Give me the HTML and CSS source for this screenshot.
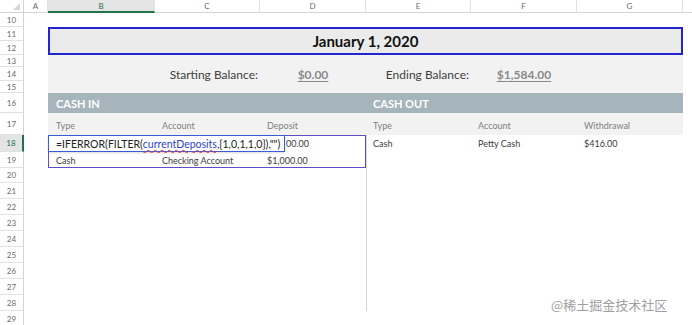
FILE: index.html
```html
<!DOCTYPE html>
<html lang="en">
<head>
    <meta charset="UTF-8">
    <title>Cash Flow</title>
    <link rel="stylesheet" href="styles.css">
</head>
<body>
    <div class="sheet">
        <!-- column headers -->
        <div class="corner">
            <svg viewBox="0 0 8 8"><path d="M8 0V8H0Z" fill="#d6d6d6"/></svg>
        </div>
        <div class="col-head">A</div>
        <div class="col-head active">B</div>
        <div class="col-head">C</div>
        <div class="col-head">D</div>
        <div class="col-head">E</div>
        <div class="col-head">F</div>
        <div class="col-head">G</div>
        <div class="col-head last"></div>

        <!-- row numbers -->
        <div class="row-head r10">10</div>
        <div class="row-head r11">11</div>
        <div class="row-head r12">12</div>
        <div class="row-head r13">13</div>
        <div class="row-head r14">14</div>
        <div class="row-head r15">15</div>
        <div class="row-head r16">16</div>
        <div class="row-head r17">17</div>
        <div class="row-head r18 active">18</div>
        <div class="row-head r19">19</div>
        <div class="row-head r20">20</div>
        <div class="row-head r21">21</div>
        <div class="row-head r22">22</div>
        <div class="row-head r23">23</div>
        <div class="row-head r24">24</div>
        <div class="row-head r25">25</div>
        <div class="row-head r26">26</div>
        <div class="row-head r27">27</div>
        <div class="row-head r28">28</div>
        <div class="row-head r29">29</div>

        <!-- title -->
        <div class="title">January 1, 2020</div>

        <!-- balances -->
        <div class="balance-bg"></div>
        <div class="balance-label col-c">Starting Balance:</div>
        <div class="balance-value col-d">$0.00</div>
        <div class="balance-label col-e">Ending Balance:</div>
        <div class="balance-value col-f">$1,584.00</div>

        <!-- section bands -->
        <div class="band band-in">CASH IN</div>
        <div class="band band-out">CASH OUT</div>

        <div class="head-bg"></div>
        <div class="cell head r17 col-b">Type</div>
        <div class="cell head r17 col-c">Account</div>
        <div class="cell head r17 col-d">Deposit</div>
        <div class="cell head r17 col-e">Type</div>
        <div class="cell head r17 col-f">Account</div>
        <div class="cell head r17 col-g">Withdrawal</div>

        <div class="cell r18 col-d hidden-part">00.00</div>
        <div class="cell r18 col-e">Cash</div>
        <div class="cell r18 col-f">Petty Cash</div>
        <div class="cell r18 col-g">$416.00</div>

        <div class="cell r19 col-b">Cash</div>
        <div class="cell r19 col-c">Checking Account</div>
        <div class="cell r19 col-d">$1,000.00</div>

        <div class="divider"></div>

        <!-- selection and in-cell editor -->
        <div class="selection"></div>
        <div class="editor">=IFERROR(FILTER(<span class="ref">currentDeposits</span>,{1,0,1,1,0}),"")</div>
    </div>

    <div class="watermark">@稀土掘金技术社区</div>
</body>
</html>
```

FILE: styles.css
```css
:root {
    --clr-grid: #e1e1e1;
    --clr-head-text: #6b6b6b;
    --clr-text: #3c3c3c;
    --clr-muted: #7f7f7f;
    --clr-panel: #f2f2f2;
    --clr-title: #ebebeb;
    --clr-band: #a6b4bc;
    --clr-green: #217346;
    --clr-blue: #2424cc;
}

* {
    margin: 0;
    padding: 0;
    box-sizing: border-box;
}

body {
    font-family: Lato, "Noto Sans", sans-serif;
    background: #ffffff;
    color: var(--clr-text);
    width: 692px;
    height: 325px;
    overflow: hidden;
    position: relative;
}

.sheet {
    display: grid;
    grid-template-columns: 24px 24px 107px 105px 106px 105px 106px 106px 1fr;
    grid-template-rows: 13px 14px 14px 14px 12px 14px 12px 20px 22px 17px 16px 15px repeat(9, 16px);
}

/* headers */
.corner {
    grid-row: 1;
    grid-column: 1;
    border-bottom: 1px solid #d4d4d4;
    border-right: 1px solid #d4d4d4;
    display: flex;
    justify-content: flex-end;
    align-items: flex-end;
    padding: 0 3px 2px 0;
}

.corner svg {
    width: 7px;
    height: 7px;
}

.col-head {
    grid-row: 1;
    border-bottom: 1px solid #d4d4d4;
    border-right: 1px solid var(--clr-grid);
    font-size: 8px;
    color: var(--clr-head-text);
    display: flex;
    align-items: center;
    justify-content: center;
}

.col-head.active {
    background: #e4e4e4;
    color: var(--clr-green);
    border-bottom: 2px solid var(--clr-green);
}

.col-head.last {
    border-right: none;
}

.row-head {
    grid-column: 1;
    border-bottom: 1px solid var(--clr-grid);
    border-right: 1px solid #d4d4d4;
    font-size: 8px;
    color: var(--clr-head-text);
    display: flex;
    align-items: center;
    justify-content: center;
}

.row-head.active {
    background: #e4e4e4;
    color: var(--clr-green);
    border-right: 2px solid var(--clr-green);
}

.r10 { grid-row: 2; }
.r11 { grid-row: 3; }
.r12 { grid-row: 4; }
.r13 { grid-row: 5; }
.r14 { grid-row: 6; }
.r15 { grid-row: 7; }
.r16 { grid-row: 8; }
.r17 { grid-row: 9; }
.r18 { grid-row: 10; }
.r19 { grid-row: 11; }
.r20 { grid-row: 12; }
.r21 { grid-row: 13; }
.r22 { grid-row: 14; }
.r23 { grid-row: 15; }
.r24 { grid-row: 16; }
.r25 { grid-row: 17; }
.r26 { grid-row: 18; }
.r27 { grid-row: 19; }
.r28 { grid-row: 20; }
.r29 { grid-row: 21; }

.col-b { grid-column: 3; }
.col-c { grid-column: 4; }
.col-d { grid-column: 5; }
.col-e { grid-column: 6; }
.col-f { grid-column: 7; }
.col-g { grid-column: 8; }

/* title */
.title {
    grid-row: 3 / 5;
    grid-column: 3 / 9;
    background: var(--clr-title);
    border: 2px solid var(--clr-blue);
    font-size: 15px;
    font-weight: 700;
    color: #111111;
    display: flex;
    align-items: center;
    justify-content: center;
}

/* balances */
.balance-bg {
    grid-row: 5 / 8;
    grid-column: 3 / 9;
    background: var(--clr-panel);
}

.balance-label,
.balance-value {
    grid-row: 6;
    font-size: 12px;
    display: flex;
    align-items: center;
}

.balance-label {
    justify-content: flex-end;
    padding-right: 2px;
    color: #404040;
}

.balance-value {
    justify-content: center;
    color: #8a8a8a;
    font-weight: 700;
    text-decoration: underline;
    text-underline-offset: 2px;
}

/* bands */
.band {
    grid-row: 8;
    background: var(--clr-band);
    color: #ffffff;
    font-size: 11px;
    font-weight: 700;
    display: flex;
    align-items: center;
    padding-left: 8px;
}

.band-in { grid-column: 3 / 6; }
.band-out { grid-column: 6 / 9; padding-left: 7px; }

.head-bg {
    grid-row: 9;
    grid-column: 3 / 9;
    background: var(--clr-panel);
}

.cell {
    font-size: 9px;
    display: flex;
    align-items: center;
    padding-left: 7px;
    white-space: nowrap;
}

.cell.col-b { padding-left: 8px; }

/* the editor box covers the start of this value */
.cell.hidden-part { padding-left: 26px; }

.cell.head {
    color: var(--clr-muted);
    padding-top: 2px;
}

.divider {
    grid-row: 10 / 21;
    grid-column: 6;
    border-left: 1px solid #d6d6d6;
}

/* selection & editor */
.selection {
    grid-row: 10 / 12;
    grid-column: 3 / 6;
    border: 1px solid #5b4fc4;
}

.editor {
    grid-row: 10;
    grid-column: 3 / 6;
    justify-self: start;
    width: 237px;
    background: #ffffff;
    border: 1px solid #3a5bd6;
    box-shadow: 0 1px 2px rgba(0, 0, 0, 0.15);
    font-size: 10.5px;
    color: #222222;
    display: flex;
    align-items: center;
    padding-left: 7px;
    white-space: nowrap;
}

.ref {
    color: #2a3fd0;
    text-decoration: underline wavy #e04040;
    text-decoration-thickness: 1px;
}

.watermark {
    position: absolute;
    left: 551px;
    top: 295px;
    font-family: "Noto Sans CJK SC", sans-serif;
    font-size: 13px;
    color: #a0a0a0;
}
```
